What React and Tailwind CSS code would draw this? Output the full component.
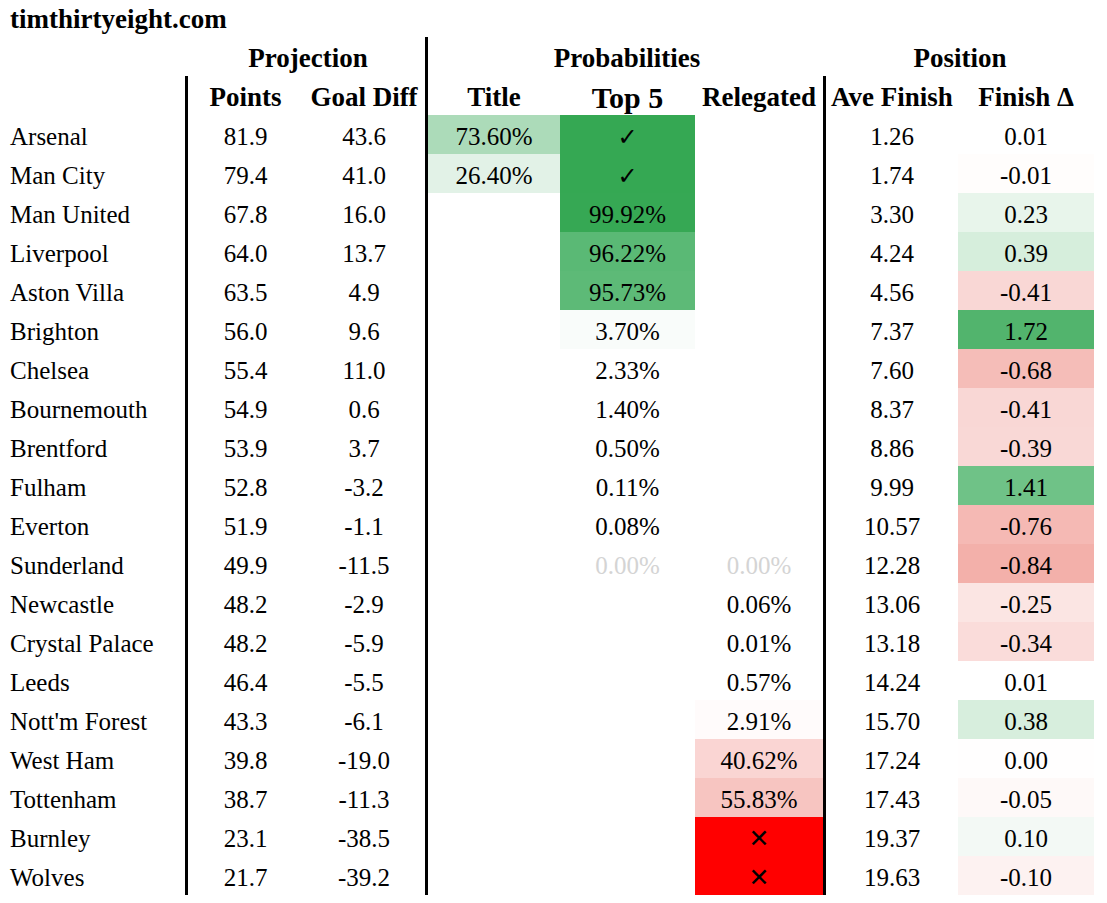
const rows = [
  { team: 'Arsenal', pts: '81.9', gd: '43.6', title: '73.60%', titleBg: 'bg-[#acdbb9]', top5: '✓', top5Bg: 'bg-[#35a853]', ave: '1.26', delta: '0.01', deltaBg: '' },
  { team: 'Man City', pts: '79.4', gd: '41.0', title: '26.40%', titleBg: 'bg-[#e2f2e7]', top5: '✓', top5Bg: 'bg-[#35a853]', ave: '1.74', delta: '-0.01', deltaBg: 'bg-[#fffdfc]' },
  { team: 'Man United', pts: '67.8', gd: '16.0', top5: '99.92%', top5Bg: 'bg-[#36a854]', ave: '3.30', delta: '0.23', deltaBg: 'bg-[#e8f5eb]' },
  { team: 'Liverpool', pts: '64.0', gd: '13.7', top5: '96.22%', top5Bg: 'bg-[#5ab975]', ave: '4.24', delta: '0.39', deltaBg: 'bg-[#d6eedc]' },
  { team: 'Aston Villa', pts: '63.5', gd: '4.9', top5: '95.73%', top5Bg: 'bg-[#5dba77]', ave: '4.56', delta: '-0.41', deltaBg: 'bg-[#f9d7d5]' },
  { team: 'Brighton', pts: '56.0', gd: '9.6', top5: '3.70%', top5Bg: 'bg-[#f9fcfa]', ave: '7.37', delta: '1.72', deltaBg: 'bg-[#52b46d]' },
  { team: 'Chelsea', pts: '55.4', gd: '11.0', top5: '2.33%', ave: '7.60', delta: '-0.68', deltaBg: 'bg-[#f5bdb8]' },
  { team: 'Bournemouth', pts: '54.9', gd: '0.6', top5: '1.40%', ave: '8.37', delta: '-0.41', deltaBg: 'bg-[#f9d7d5]' },
  { team: 'Brentford', pts: '53.9', gd: '3.7', top5: '0.50%', ave: '8.86', delta: '-0.39', deltaBg: 'bg-[#f9d8d6]' },
  { team: 'Fulham', pts: '52.8', gd: '-3.2', top5: '0.11%', ave: '9.99', delta: '1.41', deltaBg: 'bg-[#6fc287]' },
  { team: 'Everton', pts: '51.9', gd: '-1.1', top5: '0.08%', ave: '10.57', delta: '-0.76', deltaBg: 'bg-[#f5b9b4]' },
  { team: 'Sunderland', pts: '49.9', gd: '-11.5', top5: '0.00%', top5Muted: true, rel: '0.00%', relMuted: true, ave: '12.28', delta: '-0.84', deltaBg: 'bg-[#f3b0aa]' },
  { team: 'Newcastle', pts: '48.2', gd: '-2.9', rel: '0.06%', ave: '13.06', delta: '-0.25', deltaBg: 'bg-[#fbe5e3]' },
  { team: 'Crystal Palace', pts: '48.2', gd: '-5.9', rel: '0.01%', ave: '13.18', delta: '-0.34', deltaBg: 'bg-[#fadcda]' },
  { team: 'Leeds', pts: '46.4', gd: '-5.5', rel: '0.57%', ave: '14.24', delta: '0.01', deltaBg: '' },
  { team: "Nott'm Forest", pts: '43.3', gd: '-6.1', rel: '2.91%', relBg: 'bg-[#fffbfb]', ave: '15.70', delta: '0.38', deltaBg: 'bg-[#d7eedd]' },
  { team: 'West Ham', pts: '39.8', gd: '-19.0', rel: '40.62%', relBg: 'bg-[#fad5d3]', ave: '17.24', delta: '0.00', deltaBg: 'bg-[#fffefe]' },
  { team: 'Tottenham', pts: '38.7', gd: '-11.3', rel: '55.83%', relBg: 'bg-[#f7c5c1]', ave: '17.43', delta: '-0.05', deltaBg: 'bg-[#fef9f8]' },
  { team: 'Burnley', pts: '23.1', gd: '-38.5', rel: '✕', relBg: 'bg-[#ff0000]', ave: '19.37', delta: '0.10', deltaBg: 'bg-[#f3f9f5]' },
  { team: 'Wolves', pts: '21.7', gd: '-39.2', rel: '✕', relBg: 'bg-[#ff0000]', ave: '19.63', delta: '-0.10', deltaBg: 'bg-[#fdf2f1]' },
]

const cols = 'grid grid-cols-[185px_118px_122px_135px_135px_128px_135px_136px]'
const cell = 'h-[39px] pt-[4px] leading-[35px] text-center'
const line = 'border-l-[3px] border-black'

// check and cross glyphs come from DejaVu, sized to the reference strokes
function Mark({ value }) {
  if (value === '✓') return <span className="font-['DejaVu_Sans',sans-serif] text-[24px]">✓</span>
  if (value === '✕') return <span className="font-['DejaVu_Sans',sans-serif] text-[25px]">✕</span>
  return value
}

function Row({ r }) {
  return (
    <div className={cols}>
      <div className={`${cell} text-left pl-[10px]`}>{r.team}</div>
      <div className={`${cell} ${line}`}>{r.pts}</div>
      <div className={cell}>{r.gd}</div>
      <div className={`h-[39px] ${line}`}>
        <div className={`${cell} ${r.titleBg || ''}`}>{r.title}</div>
      </div>
      <div className={`${cell} ${r.top5Bg || ''} ${r.top5Muted ? 'text-[#d4d4d4]' : ''}`}>
        <Mark value={r.top5} />
      </div>
      <div className={`${cell} ${r.relBg || ''} ${r.relMuted ? 'text-[#d4d4d4]' : ''}`}>
        <Mark value={r.rel} />
      </div>
      <div className={`${cell} ${line}`}>{r.ave}</div>
      <div className={`${cell} ${r.deltaBg}`}>{r.delta}</div>
    </div>
  )
}

export default function App() {
  return (
    <div className="min-h-screen bg-white text-black font-['Liberation_Serif',serif] text-[25px]">
      {/* site name */}
      <div className="h-[37px] pt-[2px] leading-[35px] pl-[10px] text-[27px] font-bold">timthirtyeight.com</div>

      {/* group headers */}
      <div className="grid grid-cols-[185px_240px_398px_271px] h-[39px] text-[27px] font-bold">
        <div />
        <div className="text-center pl-[6px] pt-[3px] leading-[36px]">Projection</div>
        <div className={`text-center pl-[3px] pt-[3px] leading-[36px] ${line}`}>Probabilities</div>
        <div className="text-center pl-[3px] pt-[3px] leading-[36px]">Position</div>
      </div>

      {/* column headers */}
      <div className={`${cols} h-[39px] text-[27px] font-bold [&>div]:pt-[4px] [&>div]:leading-[35px]`}>
        <div />
        <div className={`text-center ${line}`}>Points</div>
        <div className="text-center">Goal Diff</div>
        <div className={`text-center ${line}`}>Title</div>
        <div className="text-center text-[30px]">Top 5</div>
        <div className="text-center whitespace-nowrap">Relegated</div>
        <div className={`text-center whitespace-nowrap ${line}`}>Ave Finish</div>
        <div className="text-center whitespace-nowrap">Finish Δ</div>
      </div>

      {rows.map((r) => (
        <Row key={r.team} r={r} />
      ))}
    </div>
  )
}
